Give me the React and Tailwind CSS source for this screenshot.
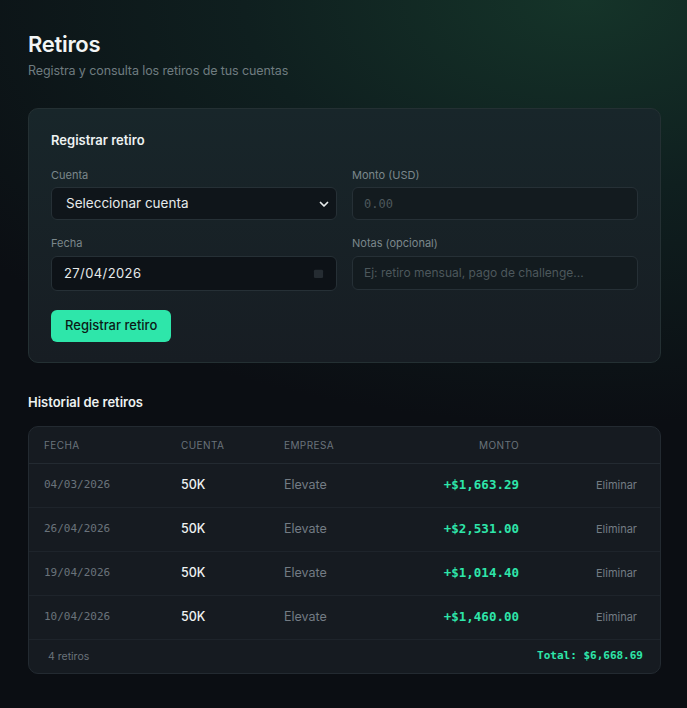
import React from "react";

const rows = [
  { fecha: "04/03/2026", cuenta: "50K", empresa: "Elevate", monto: "+$1,663.29" },
  { fecha: "26/04/2026", cuenta: "50K", empresa: "Elevate", monto: "+$2,531.00" },
  { fecha: "19/04/2026", cuenta: "50K", empresa: "Elevate", monto: "+$1,014.40" },
  { fecha: "10/04/2026", cuenta: "50K", empresa: "Elevate", monto: "+$1,460.00" },
];

const sans = { fontFamily: "Inter, 'Noto Sans', sans-serif" };
const mono = { fontFamily: "'DejaVu Sans Mono', monospace" };

export default function App() {
  return (
    <div
      className="min-h-screen w-full bg-[#0b0e13] bg-[radial-gradient(ellipse_110%_60%_at_85%_0%,#153429_0%,#0f1f1f_45%,#0b0e13_100%)] text-white"
      style={sans}
    >
      <div className="pl-[28px] pr-[26px] pt-[30px] pb-[34px]">
        <h1 className="text-[22px] font-semibold leading-[28px] tracking-[-0.3px] text-[#f2f5f5]">Retiros</h1>
        <p className="mt-[4px] text-[12.5px] leading-[18px] tracking-[-0.1px] text-[#6f7c80]">
          Registra y consulta los retiros de tus cuentas
        </p>

        <div className="mt-[28px] rounded-[10px] border border-[#243033] bg-gradient-to-b from-[#18262a] to-[#171d23] px-[22px] pt-[22px] pb-[20px]">
          <h2 className="text-[13px] font-semibold leading-[18px] text-[#eef2f2]">Registrar retiro</h2>

          <div className="mt-[19px] grid grid-cols-2 gap-x-[15px] gap-y-[16px]">
            <div>
              <label className="block text-[11px] leading-[14px] text-[#7b878b]">Cuenta</label>
              <div className="mt-[5px] flex h-[33px] items-center justify-between rounded-[6px] border border-[#263036] bg-[#0f151a] pl-[14px] pr-[6px]">
                <span className="text-[13.5px] text-[#e6eaeb]">Seleccionar cuenta</span>
                <svg width="12" height="12" viewBox="0 0 24 24" fill="none" stroke="#e6eaeb" strokeWidth="3.5" strokeLinecap="round" strokeLinejoin="round">
                  <path d="M5 9l7 7 7-7" />
                </svg>
              </div>
            </div>
            <div>
              <label className="block text-[11px] leading-[14px] text-[#7b878b]">Monto (USD)</label>
              <div className="mt-[5px] flex h-[33px] items-center rounded-[6px] border border-[#263036] bg-[#131b1f] px-[11px]">
                <span className="text-[12px] text-[#4d585c]" style={mono}>0.00</span>
              </div>
            </div>
            <div>
              <label className="block text-[11px] leading-[14px] text-[#7b878b]">Fecha</label>
              <div className="mt-[6px] flex h-[35px] items-center justify-between rounded-[6px] border border-[#263036] bg-[#0d1217] pl-[12px] pr-[12px]">
                <span className="text-[13px] tracking-[0.4px] text-[#e6eaeb]">27/04/2026</span>
                <svg width="11" height="11" viewBox="0 0 24 24" fill="#252c32">
                  <rect x="2" y="4" width="20" height="18" rx="3" />
                </svg>
              </div>
            </div>
            <div>
              <label className="block text-[11px] leading-[14px] text-[#7b878b]">Notas (opcional)</label>
              <div className="mt-[6px] flex h-[34px] items-center rounded-[6px] border border-[#263036] bg-[#131b1f] px-[11px]">
                <span className="text-[12px] text-[#4d585c]">Ej: retiro mensual, pago de challenge...</span>
              </div>
            </div>
          </div>

          <button className="mt-[19px] h-[32px] rounded-[6px] bg-[#2ee6aa] px-[14px] text-[13px] font-medium text-[#0c1a16]">
            Registrar retiro
          </button>
        </div>

        <h3 className="mt-[30px] text-[13px] font-semibold leading-[18px] text-[#eef2f2]">Historial de retiros</h3>

        <div className="mt-[15px] overflow-hidden rounded-[10px] border border-[#232a31] bg-[#161b21]">
          <div className="grid h-[37px] grid-cols-[137px_103px_100px_1fr_118px] items-center border-b border-[#232a31] pl-[15px] pr-[23px] text-[10px] uppercase tracking-[0.4px] text-[#6a737b]">
            <div>Fecha</div>
            <div>Cuenta</div>
            <div>Empresa</div>
            <div className="text-right">Monto</div>
            <div></div>
          </div>
          {rows.map((r, i) => (
            <div
              key={i}
              className="grid h-[44px] grid-cols-[137px_103px_100px_1fr_118px] items-center border-b border-[#1e242b] pl-[15px] pr-[23px]"
            >
              <div className="text-[11px] text-[#6a737b]" style={mono}>{r.fecha}</div>
              <div className="text-[12.5px] font-medium text-[#eef2f2]">{r.cuenta}</div>
              <div className="text-[12.5px] text-[#737c84]">{r.empresa}</div>
              <div className="text-right text-[12.5px] font-bold text-[#2ee6aa]" style={mono}>{r.monto}</div>
              <div className="text-right text-[11px] text-[#737c84]">Eliminar</div>
            </div>
          ))}
          <div className="flex h-[33px] items-center justify-between pl-[19px] pr-[17px]">
            <span className="text-[10.5px] text-[#6a737b]">4 retiros</span>
            <span className="text-[11px] font-bold text-[#2ee6aa]" style={mono}>Total: $6,668.69</span>
          </div>
        </div>
      </div>
    </div>
  );
}
